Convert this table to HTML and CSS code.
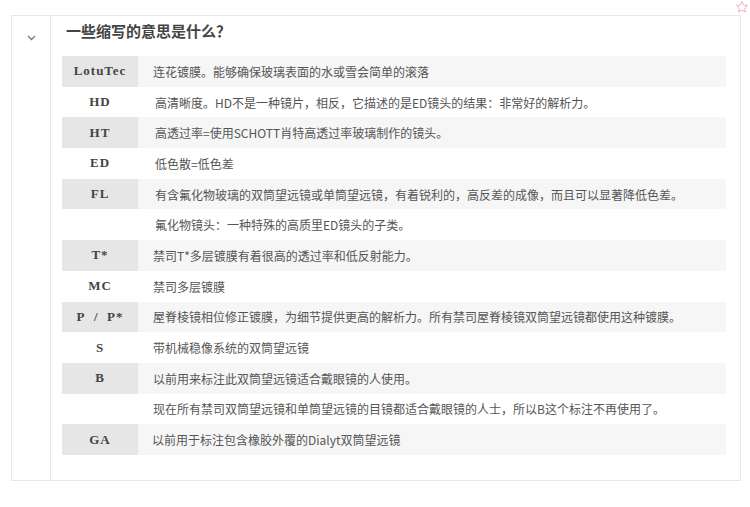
FILE: index.html
```html
<!DOCTYPE html>
<html lang="zh-CN">
<head>
    <meta charset="UTF-8">
    <title>一些缩写的意思是什么？</title>
    <link rel="stylesheet" href="styles.css">
</head>
<body>
    <svg class="star" width="14" height="14" viewBox="0 0 24 24" aria-hidden="true">
        <path d="M12 2.5l2.9 6.1 6.6.8-4.9 4.6 1.3 6.6L12 17.3l-5.9 3.3 1.3-6.6-4.9-4.6 6.6-.8z" fill="none" stroke="#f0a8c0" stroke-width="1.6" stroke-linejoin="round"/>
    </svg>

    <section class="faq">
        <div class="faq-toggle">
            <svg width="9" height="6" viewBox="0 0 9 6" aria-hidden="true">
                <path d="M1 1l3.5 3.5L8 1" fill="none" stroke="#777" stroke-width="1.3"/>
            </svg>
        </div>
        <div class="faq-body">
            <h2 class="faq-title">一些缩写的意思是什么？</h2>
            <table class="abbr">
                <tr><th>LotuTec</th><td>连花镀膜。能够确保玻璃表面的水或雪会简单的滚落</td></tr>
                <tr><th>HD</th><td class="shift">高清晰度。HD不是一种镜片，相反，它描述的是ED镜头的结果：非常好的解析力。</td></tr>
                <tr><th>HT</th><td class="shift">高透过率=使用SCHOTT肖特高透过率玻璃制作的镜头。</td></tr>
                <tr><th>ED</th><td class="shift">低色散=低色差</td></tr>
                <tr><th>FL</th><td class="shift">有含氟化物玻璃的双筒望远镜或单筒望远镜，有着锐利的，高反差的成像，而且可以显著降低色差。</td></tr>
                <tr><th></th><td class="shift">氟化物镜头：一种特殊的高质里ED镜头的子类。</td></tr>
                <tr><th>T*</th><td>禁司T*多层镀膜有着很高的透过率和低反射能力。</td></tr>
                <tr><th>MC</th><td>禁司多层镀膜</td></tr>
                <tr><th>P&nbsp; /&nbsp; P*</th><td>屋脊棱镜相位修正镀膜，为细节提供更高的解析力。所有禁司屋脊棱镜双筒望远镜都使用这种镀膜。</td></tr>
                <tr><th>S</th><td>带机械稳像系统的双筒望远镜</td></tr>
                <tr><th>B</th><td>以前用来标注此双筒望远镜适合戴眼镜的人使用。</td></tr>
                <tr><th></th><td>现在所有禁司双筒望远镜和单筒望远镜的目镜都适合戴眼镜的人士，所以B这个标注不再使用了。</td></tr>
                <tr><th>GA</th><td class="back">以前用于标注包含橡胶外覆的Dialyt双筒望远镜</td></tr>
            </table>
        </div>
    </section>
</body>
</html>
```

FILE: styles.css
```css
body {
    margin: 0;
    padding: 15px 9px 0 11px;
    background-color: #fff;
    font-family: "Noto Sans CJK SC", "Liberation Sans", sans-serif;
    color: #555;
    position: relative;
}
.star {
    position: absolute;
    top: 0;
    right: 1px;
}
.faq {
    display: flex;
    border: 1px solid #e8e8e8;
    height: 466px;
    box-sizing: border-box;
}
.faq-toggle {
    width: 39px;
    border-right: 1px solid #e8e8e8;
    display: flex;
    justify-content: center;
    padding-top: 19px;
    box-sizing: border-box;
}
.faq-toggle svg {
    display: block;
}
.faq-body {
    flex: 1;
    padding: 4px 14px 0 11px;
}
.faq-title {
    margin: 0;
    font-size: 15px;
    line-height: 22px;
    font-weight: bold;
    color: #444;
    padding-left: 4px;
}
.abbr {
    margin-top: 14px;
    width: 664px;
    border-collapse: collapse;
    font-size: 12px;
}
.abbr tr {
    height: 30.7px;
}
.abbr th {
    width: 76px;
    padding: 0;
    text-align: center;
    font-family: "Liberation Serif", "DejaVu Serif", serif;
    font-size: 13px;
    font-weight: bold;
    letter-spacing: 1px;
    color: #444;
    white-space: nowrap;
}
.abbr td {
    padding: 0 0 0 15px;
    white-space: nowrap;
}
.abbr td.shift {
    padding-left: 17px;
}
.abbr td.back {
    padding-left: 14px;
}
.abbr tr:nth-child(odd) th {
    background-color: #e6e6e6;
}
.abbr tr:nth-child(odd) td {
    background-color: #f6f6f6;
}
```
